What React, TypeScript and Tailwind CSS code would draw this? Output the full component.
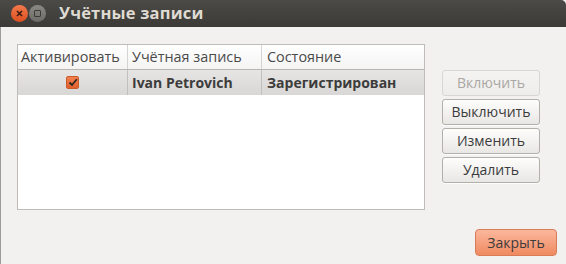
const FONT = { fontFamily: '"Open Sans", "DejaVu Sans", sans-serif' };

function CheckBox() {
  return (
    <span className="inline-flex items-center justify-center w-[13px] h-[13px] rounded-[2px] bg-gradient-to-b from-[#f2804d] to-[#e0602a] border border-[#c85a2a]">
      <svg width="10" height="9" viewBox="0 0 10 9">
        <path d="M1.5 4.5 L4 7 L8.8 1.2" fill="none" stroke="#2b2622" strokeWidth="1.8" />
      </svg>
    </span>
  );
}

function SideButton({ label, disabled }: { label: string; disabled?: boolean }) {
  return (
    <button
      className={`w-[98px] h-[26px] rounded-[3px] border bg-gradient-to-b text-[14px] leading-none ${
        disabled
          ? "border-[#d8d6d2] from-[#f4f3f2] to-[#eeedeb] text-[#a9a7a3]"
          : "border-[#b3b0aa] from-[#fdfdfc] to-[#e9e7e4] text-[#3c3c3c] shadow-[0_1px_0_rgba(255,255,255,0.8)]"
      }`}
    >
      {label}
    </button>
  );
}

export default function App() {
  return (
    <div className="w-[566px] h-[264px] bg-[#f2f1f0] flex flex-col" style={FONT}>
      {/* title bar */}
      <div className="h-[27px] shrink-0 rounded-tr-[5px] bg-gradient-to-b from-[#4b4a46] to-[#3b3a36] flex items-center pl-[11px]">
        <span className="w-[17px] h-[17px] rounded-full bg-gradient-to-b from-[#f2784a] to-[#dc4f1e] flex items-center justify-center">
          <svg width="7" height="7" viewBox="0 0 7 7">
            <path d="M1 1 L6 6 M6 1 L1 6" stroke="#3a1a0e" strokeWidth="1.6" />
          </svg>
        </span>
        <span className="ml-[1px] w-[17px] h-[17px] rounded-full bg-gradient-to-b from-[#8a8984] to-[#6c6b66] flex items-center justify-center">
          <span className="w-[7px] h-[7px] border-[1.5px] border-[#3c3b37] rounded-[1px]" />
        </span>
        <span className="ml-[13px] text-[16.5px] font-bold text-[#dfdbd2] leading-none tracking-[0.2px]">
          Учётные записи
        </span>
      </div>

      {/* body */}
      <div className="flex-1 border-l border-[#9e9c97] flex flex-col pt-[17px] pl-[16px] pr-[9px]">
        <div className="flex">
          <div className="w-[408px] h-[166px] border border-[#bfbcb7] bg-white">
            <div className="flex h-[25px] border-b border-[#b8b5b0] text-[14.4px] text-[#4a4a4a] bg-gradient-to-b from-white to-[#f5f4f3]">
              <div className="w-[110px] pl-[3px] flex items-center border-r border-[#d6d4d0]">Активировать</div>
              <div className="w-[134px] pl-[4px] flex items-center border-r border-[#d6d4d0]">Учётная запись</div>
              <div className="flex-1 pl-[5px] flex items-center">Состояние</div>
            </div>
            <div className="flex h-[25px] text-[14px] font-bold text-[#3c3c3c] bg-gradient-to-b from-[#e6e5e3] to-[#d8d7d5]">
              <div className="w-[110px] flex items-center justify-center border-r border-[#c2c0bc]">
                <CheckBox />
              </div>
              <div className="w-[134px] pl-[4px] flex items-center border-r border-[#c2c0bc]">Ivan Petrovich</div>
              <div className="flex-1 pl-[5px] flex items-center">Зарегистрирован</div>
            </div>
          </div>
          <div className="ml-[17px] mt-[26px] flex flex-col gap-[3px]">
            <SideButton label="Включить" disabled />
            <SideButton label="Выключить" />
            <SideButton label="Изменить" />
            <SideButton label="Удалить" />
          </div>
        </div>
        <div className="flex justify-end mt-[19px]">
          <button className="w-[82px] h-[27px] rounded-[4px] border border-[#d67c57] bg-gradient-to-b from-[#fbb79c] to-[#ef8a60] text-[14px] text-[#3c3c3c] leading-none">
            Закрыть
          </button>
        </div>
      </div>
    </div>
  );
}
